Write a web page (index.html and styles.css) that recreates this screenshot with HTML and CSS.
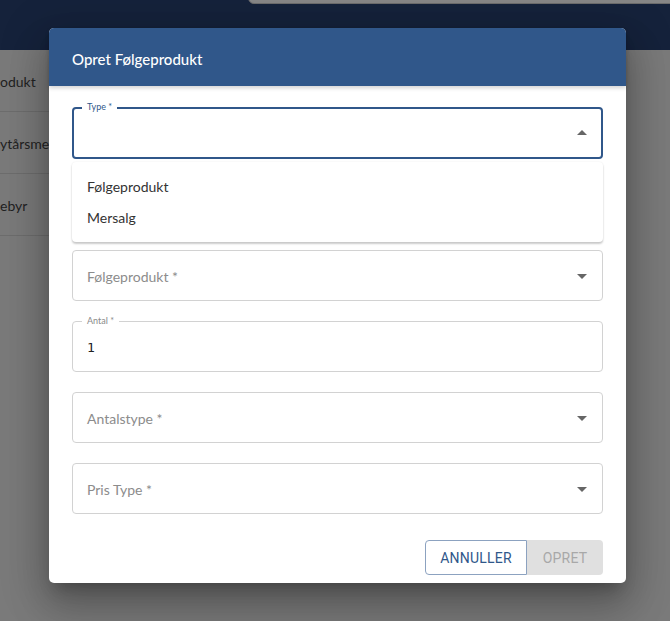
FILE: index.html
```html
<!DOCTYPE html>
<html lang="da">
<head>
<meta charset="utf-8">
<title>Opret Følgeprodukt</title>
<link rel="stylesheet" href="styles.css">
</head>
<body>
<div class="page">
  <header class="topbar">
    <div class="search"></div>
  </header>
  <ul class="list">
    <li class="row">odukt</li>
    <li class="row">ytårsmeddelelse</li>
    <li class="row">ebyr</li>
  </ul>
</div>

<div class="dialog">
  <div class="dialog-head">Opret Følgeprodukt</div>
  <div class="dialog-body">
    <div class="field focused">
      <span class="label">Type *</span>
      <span class="value"></span>
      <svg class="arrow" viewBox="0 0 10 5" width="10" height="5"><path d="M0 5L5 0L10 5Z"/></svg>
      <ul class="menu">
        <li class="menu-item">Følgeprodukt</li>
        <li class="menu-item">Mersalg</li>
      </ul>
    </div>
    <div class="field">
      <svg class="arrow" viewBox="0 0 10 5" width="10" height="5"><path d="M0 0L5 5L10 0Z"/></svg>
    </div>
    <div class="field">
      <span class="placeholder">Følgeprodukt *</span>
      <svg class="arrow" viewBox="0 0 10 5" width="10" height="5"><path d="M0 0L5 5L10 0Z"/></svg>
    </div>
    <div class="field">
      <span class="label">Antal *</span>
      <span class="value mono">1</span>
    </div>
    <div class="field">
      <span class="placeholder">Antalstype *</span>
      <svg class="arrow" viewBox="0 0 10 5" width="10" height="5"><path d="M0 0L5 5L10 0Z"/></svg>
    </div>
    <div class="field">
      <span class="placeholder">Pris Type *</span>
      <svg class="arrow" viewBox="0 0 10 5" width="10" height="5"><path d="M0 0L5 5L10 0Z"/></svg>
    </div>
    <div class="actions">
      <button class="btn btn-outline">Annuller</button>
      <button class="btn btn-disabled" disabled>Opret</button>
    </div>
  </div>
</div>
</body>
</html>
```

FILE: styles.css
```css
* { box-sizing: border-box; }
html, body {
  margin: 0;
  padding: 0;
  width: 670px;
  height: 621px;
  overflow: hidden;
  background: #7a7a7a;
  font-family: "Lato", "Open Sans", sans-serif;
}
.page {
  width: 670px;
  height: 621px;
}
.topbar {
  height: 50px;
  background: #15223b;
  position: relative;
}
.search {
  position: absolute;
  left: 248px;
  right: -10px;
  top: -10px;
  height: 14px;
  background: #878787;
  border-radius: 6px;
  border: 1px solid #6c6c6c;
}
.list {
  list-style: none;
  margin: 0;
  padding: 0;
  width: 300px;
}
.row {
  height: 62px;
  border-bottom: 1px solid #6d6d6d;
  display: flex;
  align-items: center;
  font-size: 14px;
  color: #222;
  padding-top: 2px;
  white-space: nowrap;
}

.dialog {
  position: absolute;
  left: 49px;
  top: 28px;
  width: 577px;
  height: 555px;
  background: #fff;
  border-radius: 5px;
  box-shadow: 0 11px 15px -7px rgba(0,0,0,0.25), 0 24px 38px 3px rgba(0,0,0,0.18), 0 9px 46px 8px rgba(0,0,0,0.15);
  display: flex;
  flex-direction: column;
}
.dialog-head {
  height: 61px;
  background: #30578a;
  border-radius: 5px 5px 0 0;
  color: #fff;
  font-size: 15px;
  font-weight: 500;
  padding: 22px 23px 0;
  box-shadow: 0 2px 4px rgba(0,0,0,0.18);
  position: relative;
  z-index: 1;
}
.dialog-body {
  padding: 21px 23px 8px;
  display: flex;
  flex-direction: column;
  gap: 20px;
}
.field {
  position: relative;
  height: 51px;
  border: 1px solid #d2d2d2;
  border-radius: 4px;
  display: flex;
  align-items: center;
  padding: 0 14px;
}
.field.focused {
  border: 2px solid #30578a;
  height: 52px;
  padding: 0 13px;
}
.label {
  position: absolute;
  left: 9px;
  top: -7px;
  font-size: 9px;
  line-height: 12px;
  color: #8a8a8a;
  background: #fff;
  padding: 0 5px;
}
.focused .label {
  left: 8px;
  top: -8px;
  color: #30578a;
}
.placeholder {
  font-size: 14px;
  color: #8c8c8c;
  padding-top: 1px;
}
.value {
  font-size: 14px;
  color: #222;
}
.mono {
  font-family: "DejaVu Sans Mono", monospace;
  font-size: 13px;
  padding-top: 2px;
}
.arrow {
  position: absolute;
  right: 15px;
  top: 50%;
  margin-top: -2px;
  fill: #666;
}
.focused .arrow { right: 14px; margin-top: -3px; }

.menu {
  position: absolute;
  left: -2px;
  right: -2px;
  top: 53px;
  height: 80px;
  margin: 0;
  padding: 9px 0 8px;
  list-style: none;
  background: #fff;
  border-radius: 4px;
  box-shadow: 0 2px 2px rgba(0,0,0,0.2), 0 0 2px rgba(0,0,0,0.08);
  z-index: 5;
}
.menu-item {
  height: 31px;
  display: flex;
  align-items: center;
  padding: 0 15px;
  font-size: 14px;
  color: #333;
}

.actions {
  display: flex;
  justify-content: flex-end;
  margin-top: 6px;
}
.btn {
  height: 35px;
  font-family: "Roboto", sans-serif;
  font-size: 14px;
  text-transform: uppercase;
  letter-spacing: 0.2px;
  border: none;
  margin: 0;
  padding: 0;
}
.btn-outline {
  width: 102px;
  background: #fff;
  color: #30578a;
  border: 1px solid #8ca2c0;
  border-radius: 4px 0 0 4px;
}
.btn-disabled {
  width: 76px;
  background: #e0e0e0;
  color: #a8a8a8;
  border-radius: 0 4px 4px 0;
}
```
